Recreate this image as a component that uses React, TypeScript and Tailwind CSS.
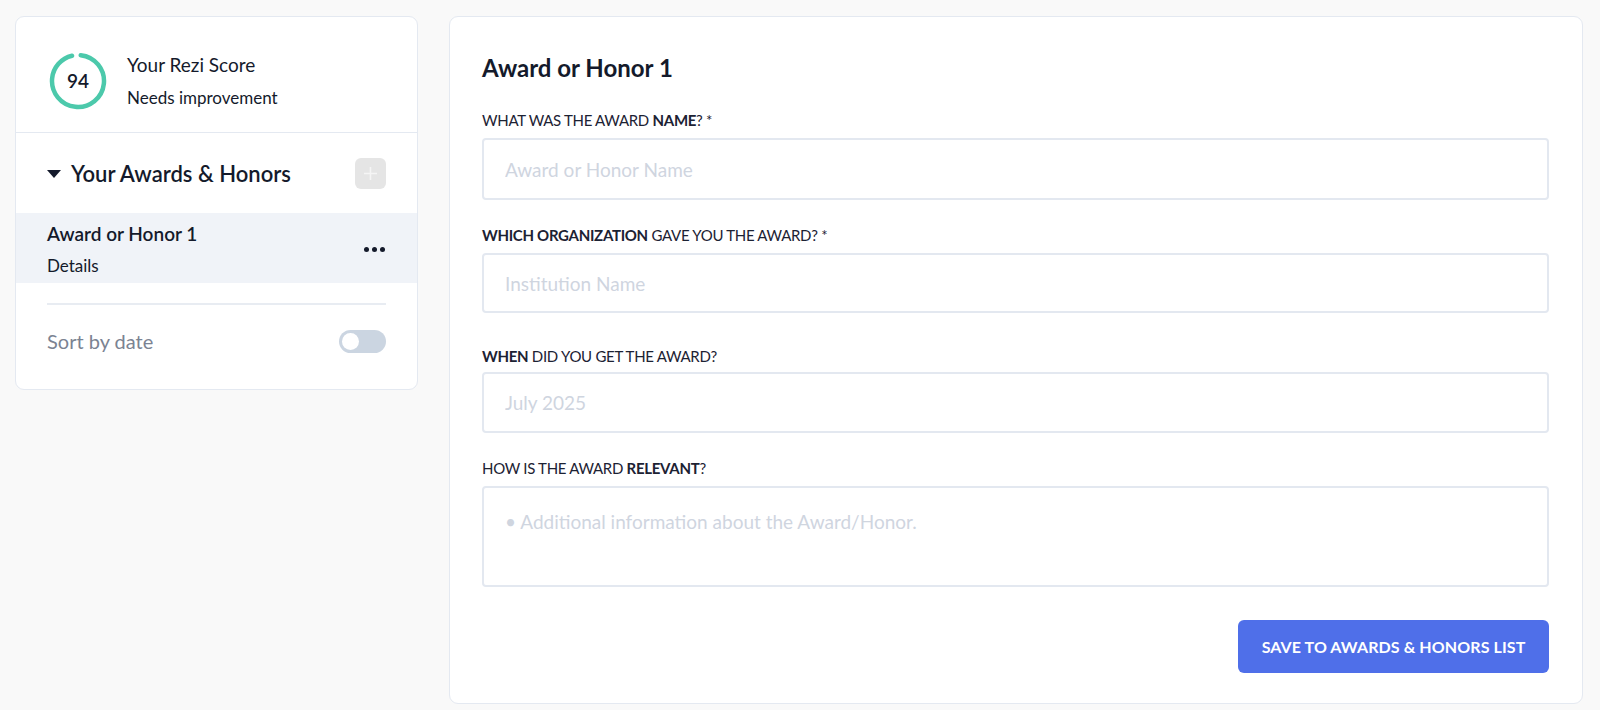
import { useState } from 'react'

/* ===========================
   Awards & Honors editor
   =========================== */

const FONT = { fontFamily: 'Lato, "Noto Sans", "Liberation Sans", sans-serif' }

function ScoreRing({ score }: { score: number }) {
  const r = 26
  const c = 2 * Math.PI * r
  const dash = (score / 100) * c
  return (
    <div className="relative w-[58px] h-[58px] shrink-0">
      <svg width="58" height="58" viewBox="0 0 58 58" className="absolute inset-0">
        <circle
          cx="29"
          cy="29"
          r={r}
          fill="none"
          stroke="#4cc9ab"
          strokeWidth="4.5"
          strokeLinecap="round"
          strokeDasharray={`${dash} ${c}`}
          transform="rotate(-84 29 29)"
        />
      </svg>
      <div className="absolute inset-0 flex items-center justify-center text-[19px] font-semibold text-[#141a2b]">
        {score}
      </div>
    </div>
  )
}

function Label({ children, tight }: { children: React.ReactNode; tight?: boolean }) {
  return (
    <div className={'text-[15px] leading-5 text-[#1c2233] uppercase tracking-[-0.3px] ' + (tight ? 'mb-[6px]' : 'mb-[8px]')}>
      {children}
    </div>
  )
}

function Field({ placeholder, area, h }: { placeholder: string; area?: boolean; h?: string }) {
  const cls =
    'w-full border-2 border-[#e3e8f0] rounded-[4px] px-[21px] text-[19px] text-[#1c2233] placeholder:text-[#cfd5df] outline-none bg-white block'
  if (area) {
    return <textarea placeholder={placeholder} className={cls + ' h-[101px] pt-[20px] resize-none'} style={FONT} />
  }
  return <input placeholder={placeholder} className={cls + ' ' + (h ?? 'h-[62px]')} style={FONT} />
}

export default function App() {
  const [sorted, setSorted] = useState(false)

  return (
    <div className="min-h-screen bg-[#f9f9f9] flex items-start gap-[31px] pl-[15px] pr-[17px] pt-[16px]" style={FONT}>
      {/* left panel */}
      <aside className="w-[403px] shrink-0 bg-white border border-[#e4e9f1] rounded-[9px] overflow-hidden">
        <div className="flex items-center gap-[20px] pl-[33px] pt-[35px] pb-[22px] border-b border-[#e4e9f1]">
          <ScoreRing score={94} />
          <div className="flex flex-col">
            <span className="text-[19px] leading-6 text-[#141a2b] -mt-[4px]">Your Rezi Score</span>
            <span className="text-[17px] leading-5 text-[#141a2b] mt-[11px] -mb-[2px]">Needs improvement</span>
          </div>
        </div>

        <div className="flex items-center justify-between pl-[31px] pr-[31px] pt-[25px] pb-[24px]">
          <div className="flex items-center gap-[10px]">
            <svg width="14" height="8" viewBox="0 0 14 8">
              <path d="M0 0 H14 L7 8 Z" fill="#141a2b" />
            </svg>
            <span className="text-[22px] font-semibold text-[#141a2b] leading-7">Your Awards &amp; Honors</span>
          </div>
          <button className="w-[31px] h-[31px] rounded-[6px] bg-[#e5e5e5] flex items-center justify-center">
            <svg width="15" height="15" viewBox="0 0 15 15">
              <path d="M7.5 1 V14 M1 7.5 H14" stroke="#f5f5f5" strokeWidth="1.6" />
            </svg>
          </button>
        </div>

        <div className="flex items-center justify-between bg-[#f0f3f8] pl-[31px] pr-[32px] h-[70px]">
          <div className="flex flex-col">
            <span className="text-[19px] font-semibold text-[#141a2b] leading-6">Award or Honor 1</span>
            <span className="text-[17px] text-[#141a2b] leading-5 mt-[10px] -mb-[2px]">Details</span>
          </div>
          <div className="flex gap-[3px] mt-[2px]">
            <span className="w-[5px] h-[5px] rounded-full bg-[#141a2b]" />
            <span className="w-[5px] h-[5px] rounded-full bg-[#141a2b]" />
            <span className="w-[5px] h-[5px] rounded-full bg-[#141a2b]" />
          </div>
        </div>

        <div className="mx-[31px] mt-[20px] border-t-2 border-[#e8ecf2]" />

        <div className="flex items-center justify-between pl-[31px] pr-[31px] pt-[21px] pb-[33px]">
          <span className="text-[20px] text-[#7b8392]">Sort by date</span>
          <button
            onClick={() => setSorted(!sorted)}
            className="w-[47px] h-[23px] rounded-full bg-[#cbd5e1] flex items-center px-[3px]"
          >
            <span className="w-[17px] h-[17px] rounded-full bg-white" />
          </button>
        </div>
      </aside>

      {/* main form */}
      <main className="flex-1 bg-white border border-[#e4e9f1] rounded-[9px] pl-[32px] pr-[33px] pt-[37px] pb-[30px] min-h-[687px]">
        <h1 className="text-[24px] font-bold text-[#141a2b] leading-7 mb-[28px]">Award or Honor 1</h1>

        <Label>
          What was the award <b>name</b>? *
        </Label>
        <Field placeholder="Award or Honor Name" />

        <div className="mt-[25px]">
          <Label>
            <b>Which organization</b> gave you the award? *
          </Label>
          <Field placeholder="Institution Name" h="h-[60px]" />
        </div>

        <div className="mt-[33px]">
          <Label tight>
            <b>When</b> did you get the award?
          </Label>
          <Field placeholder="July 2025" h="h-[61px]" />
        </div>

        <div className="mt-[25px]">
          <Label>
            How is the award <b>relevant</b>?
          </Label>
          <Field placeholder="• Additional information about the Award/Honor." area />
        </div>

        <div className="flex justify-end mt-[33px]">
          <button className="w-[311px] h-[53px] rounded-[6px] bg-[#4f6fe9] text-white text-[16px] font-bold uppercase tracking-[0.1px]">
            Save to Awards &amp; Honors list
          </button>
        </div>
      </main>
    </div>
  )
}
